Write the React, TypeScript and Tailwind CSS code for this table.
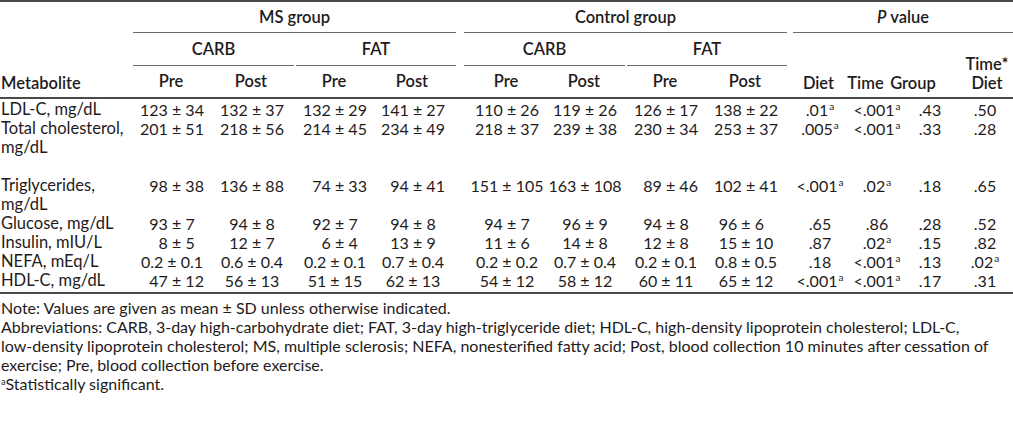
import React from "react";

type P = { v: string; sig?: boolean };
type Row = { name: string[]; vals: string[]; p: P[]; extra?: boolean };

const FS = "\u2007";

const rows: Row[] = [
  {
    name: ["LDL-C, mg/dL"],
    vals: ["123 ± 34", "132 ± 37", "132 ± 29", "141 ± 27", "110 ± 26", "119 ± 26", "126 ± 17", "138 ± 22"],
    p: [{ v: ".01", sig: true }, { v: "<.001", sig: true }, { v: ".43" }, { v: ".50" }],
  },
  {
    name: ["Total cholesterol,", "mg/dL"],
    vals: ["201 ± 51", "218 ± 56", "214 ± 45", "234 ± 49", "218 ± 37", "239 ± 38", "230 ± 34", "253 ± 37"],
    p: [{ v: ".005", sig: true }, { v: "<.001", sig: true }, { v: ".33" }, { v: ".28" }],
    extra: true,
  },
  {
    name: ["Triglycerides,", "mg/dL"],
    vals: [FS + "98 ± 38", "136 ± 88", FS + "74 ± 33", FS + "94 ± 41", "151 ± 105", "163 ± 108", FS + "89 ± 46", "102 ± 41"],
    p: [{ v: "<.001", sig: true }, { v: ".02", sig: true }, { v: ".18" }, { v: ".65" }],
  },
  {
    name: ["Glucose, mg/dL"],
    vals: ["93 ± 7", "94 ± 8", "92 ± 7", "94 ± 8", "94 ± 7", "96 ± 9", "94 ± 8", "96 ± 6" + FS],
    p: [{ v: ".65" }, { v: ".86" }, { v: ".28" }, { v: ".52" }],
  },
  {
    name: ["Insulin, mIU/L"],
    vals: [FS + "8 ± 5", "12 ± 7", FS + "6 ± 4", "13 ± 9", "11 ± 6", "14 ± 8", "12 ± 8", "15 ± 10"],
    p: [{ v: ".87" }, { v: ".02", sig: true }, { v: ".15" }, { v: ".82" }],
  },
  {
    name: ["NEFA, mEq/L"],
    vals: ["0.2 ± 0.1", "0.6 ± 0.4", "0.2 ± 0.1", "0.7 ± 0.4", "0.2 ± 0.2", "0.7 ± 0.4", "0.2 ± 0.1", "0.8 ± 0.5"],
    p: [{ v: ".18" }, { v: "<.001", sig: true }, { v: ".13" }, { v: ".02", sig: true }],
  },
  {
    name: ["HDL-C, mg/dL"],
    vals: [FS + "47 ± 12", "56 ± 13", "51 ± 15", "62 ± 13", "54 ± 12", "58 ± 12", "60 ± 11", "65 ± 12"],
    p: [{ v: "<.001", sig: true }, { v: "<.001", sig: true }, { v: ".17" }, { v: ".31" }],
  },
];

const msCell = ["ml-0", "ml-[4px]", "ml-[7px]", "ml-[2px]"];
const ctCell = ["ml-[4px]", "ml-[2px]", "ml-[5px]", "ml-[4px]"];
const pCell = ["ml-[1px]", "ml-[7px]", "ml-[3px]", "ml-[5px]"];

function Sup() {
  return <sup className="text-[10px] -top-[6px] ml-[1px]">a</sup>;
}

function Cell({ cls, children }: { cls: string; children: React.ReactNode }) {
  return (
    <div className={`${cls} w-[76px] flex justify-center whitespace-pre`}>{children}</div>
  );
}

function PCellEl({ cls, children }: { cls: string; children: React.ReactNode }) {
  return (
    <div className={`${cls} w-[50px] flex justify-center whitespace-pre`}>{children}</div>
  );
}

export default function App() {
  return (
    <div
      className="w-[1013px] h-[429px] bg-white text-[#1f1b1c] overflow-hidden"
      style={{ fontFamily: "Lato, 'Open Sans', sans-serif" }}
    >
      {/* Table */}
      <div className="border-t-2 border-[#4a4a4a] text-[16.5px] leading-[19px]">
        {/* Header */}
        <div className="flex font-semibold border-b-2 border-[#4a4a4a]">
          <div className="w-[134px] flex items-end pb-[4px] pl-[1px]">Metabolite</div>
          {/* MS group */}
          <div className="w-[323px] flex flex-col">
            <div className="h-[31px] pt-[6px] text-center border-b border-[#6b6b6b]">MS group</div>
            <div className="flex h-[33px]">
              <div className="w-[161px] pt-[7px] text-center border-b border-[#6b6b6b]">CARB</div>
              <div className="ml-[2px] w-[160px] pt-[7px] text-center border-b border-[#6b6b6b]">FAT</div>
            </div>
            <div className="flex h-[31px] pt-[6px]">
              {["Pre", "Post", "Pre", "Post"].map((t, i) => (
                <Cell key={i} cls={msCell[i]}>{t}</Cell>
              ))}
            </div>
          </div>
          {/* Control group */}
          <div className="ml-[8px] w-[323px] flex flex-col">
            <div className="h-[31px] pt-[6px] text-center border-b border-[#6b6b6b]">Control group</div>
            <div className="flex h-[33px]">
              <div className="w-[161px] pt-[7px] text-center border-b border-[#6b6b6b]">CARB</div>
              <div className="ml-[2px] w-[160px] pt-[7px] text-center border-b border-[#6b6b6b]">FAT</div>
            </div>
            <div className="flex h-[31px] pt-[6px]">
              {["Pre", "Post", "Pre", "Post"].map((t, i) => (
                <Cell key={i} cls={ctCell[i]}>{t}</Cell>
              ))}
            </div>
          </div>
          {/* P value */}
          <div className="ml-[6px] flex-1 flex flex-col">
            <div className="h-[31px] pt-[6px] text-center border-b border-[#6b6b6b]">
              <span className="italic">P</span> value
            </div>
            <div className="flex h-[64px] items-end pb-[4px]">
              <div className="w-[51px] text-center">Diet</div>
              <div className="w-[43px] text-center">Time</div>
              <div className="w-[52px] text-center">Group</div>
              <div className="ml-[22px] w-[52px] text-center flex flex-col">
                <span>Time*</span>
                <span>Diet</span>
              </div>
            </div>
          </div>
        </div>

        {/* Body */}
        <div className="pt-[1px] pb-[2px] border-b-2 border-[#4a4a4a] text-[16px]">
          {rows.map((r, ri) => (
            <div key={ri} className={`flex ${r.extra ? "pb-[19px]" : ""}`}>
              <div className="w-[134px] pl-[1px] text-[16.5px]">
                {r.name.map((n, k) => (
                  <div key={k}>{n}</div>
                ))}
              </div>
              <div className="w-[323px] flex items-start">
                {r.vals.slice(0, 4).map((v, i) => (
                  <Cell key={i} cls={msCell[i]}>{v}</Cell>
                ))}
              </div>
              <div className="ml-[8px] w-[323px] flex items-start">
                {r.vals.slice(4).map((v, i) => (
                  <Cell key={i} cls={ctCell[i]}>{v}</Cell>
                ))}
              </div>
              <div className="ml-[6px] flex-1 flex items-start">
                {r.p.map((p, i) => (
                  <PCellEl key={i} cls={pCell[i]}>
                    <span>
                      {p.v}
                      {p.sig ? <Sup /> : null}
                    </span>
                  </PCellEl>
                ))}
              </div>
            </div>
          ))}
        </div>
      </div>

      {/* Footnotes */}
      <div className="pt-[4px] text-[16px] leading-[19px] pl-[1px]">
        <div>Note: Values are given as mean ± SD unless otherwise indicated.</div>
        <div className="whitespace-nowrap">
          Abbreviations: CARB, 3-day high-carbohydrate diet; FAT, 3-day high-triglyceride diet; HDL-C, high-density lipoprotein cholesterol; LDL-C,
        </div>
        <div className="whitespace-nowrap">
          low-density lipoprotein cholesterol; MS, multiple sclerosis; NEFA, nonesterified fatty acid; Post, blood collection 10 minutes after cessation of
        </div>
        <div>exercise; Pre, blood collection before exercise.</div>
        <div>
          <sup className="text-[9px] -top-[5px]">a</sup>Statistically significant.
        </div>
      </div>
    </div>
  );
}
